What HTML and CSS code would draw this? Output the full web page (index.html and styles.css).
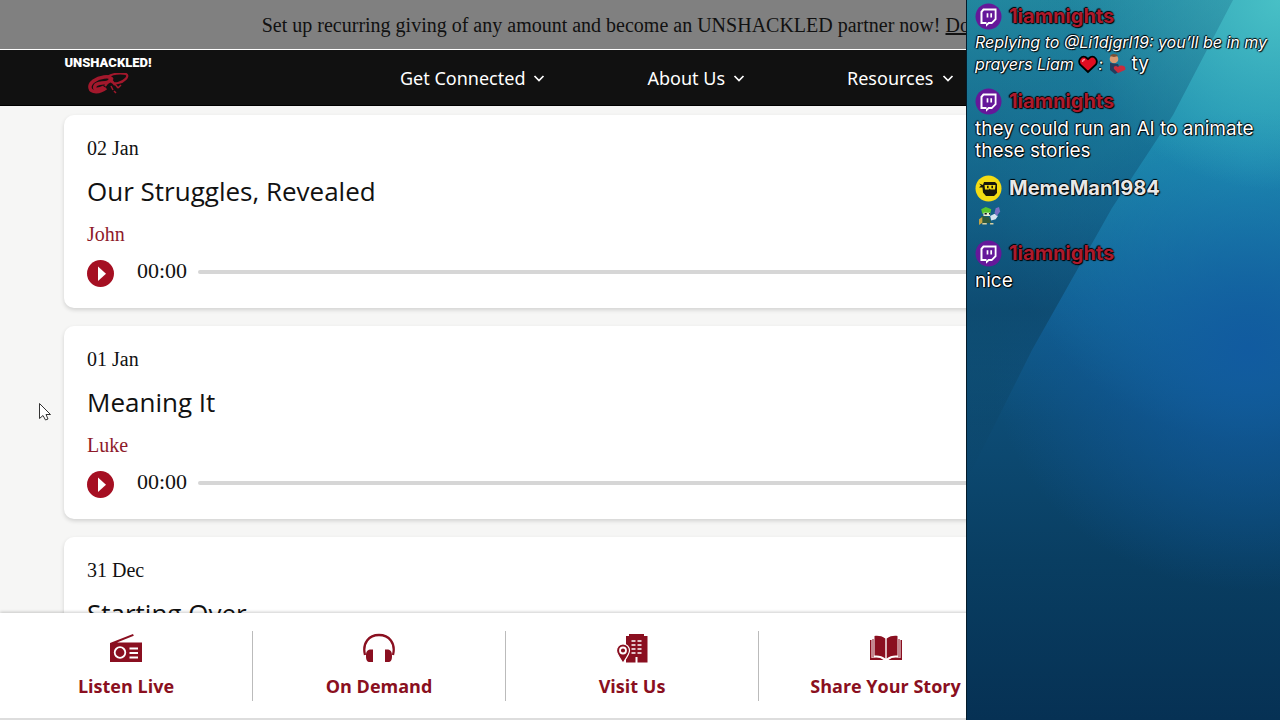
FILE: index.html
```
<!DOCTYPE html>
<html lang="en">
<head>
<meta charset="utf-8">
<title>UNSHACKLED! – Episodes</title>
<link rel="stylesheet" href="styles.css">
</head>
<body>
<svg class="defs" aria-hidden="true">
  <symbol id="chevron" viewBox="0 0 12 12"><path d="M1.500 4l4.500 4.500L10.500 4" fill="none" stroke="currentColor" stroke-width="1.700"/></symbol>
  <symbol id="play" viewBox="0 0 27 27"><circle cx="13.500" cy="13.500" r="13.500" fill="#a50f22"/><path d="M11 6.500v14.500l8-7.200z" fill="#fff"/></symbol>
  <symbol id="twitch" viewBox="0 0 27 27"><circle cx="13.500" cy="13.500" r="13" fill="#65189a"/><path d="M8 5.500h13.500v11l-4.500 4.500h-3l-3 2.800V21H5.500V8.500z" fill="#fff"/><path d="M9 7.500h10.700v8.200l-3.200 3.300h-3.200l-1.800 1.700V19H7.500V9.200z" fill="#65189a"/><path d="M12.500 10.200v4.300M16.200 10.200v4.300" stroke="#fff" stroke-width="1.700"/></symbol>
</svg>
<div class="window">
  <div class="site">
    <p class="banner">Set up recurring giving of any amount and become an UNSHACKLED partner now! <a href="#donate">Donate</a></p>
    <header class="header">
      <a class="logo" href="#home">
        <span class="logo-text">UNSHACKLED!</span>
        <svg class="logo-chain" viewBox="0 0 42 22" aria-hidden="true">
          <g fill="none" stroke="#a3182c">
            <path d="M19 15C13 20 4 20 3 15S9 5 17 4s9 3 4 5-11 0-13 4 3 4 9 1" stroke-width="3.500"/>
            <path d="M20 4c5-3 13-4 19-3 4 2-2 8-8 9s-9-2-5-5M22 4l6 8M18 13l6-8" stroke-width="2.200"/>
            <path d="M24 13l2 4m2-6l3 4m3-3l-3 3m-4 3l2 2" stroke-width="1.500"/>
          </g>
        </svg>
      </a>
      <nav class="nav" aria-label="Main">
        <button class="nav-item">Get Connected <svg class="chevron"><use href="#chevron"/></svg></button>
        <button class="nav-item">About Us <svg class="chevron"><use href="#chevron"/></svg></button>
        <button class="nav-item">Resources <svg class="chevron"><use href="#chevron"/></svg></button>
      </nav>
    </header>
    <main class="episodes">
      <article class="card">
        <time class="date">02 Jan</time>
        <h2 class="title">Our Struggles, Revealed</h2>
        <a class="author" href="#john">John</a>
        <div class="player">
          <button class="play" aria-label="Play Our Struggles, Revealed"><svg><use href="#play"/></svg></button>
          <span class="time">00:00</span>
          <input class="seek" type="range" value="0" aria-label="Seek in Our Struggles, Revealed">
        </div>
      </article>
      <article class="card">
        <time class="date">01 Jan</time>
        <h2 class="title">Meaning It</h2>
        <a class="author" href="#luke">Luke</a>
        <div class="player">
          <button class="play" aria-label="Play Meaning It"><svg><use href="#play"/></svg></button>
          <span class="time">00:00</span>
          <input class="seek" type="range" value="0" aria-label="Seek in Meaning It">
        </div>
      </article>
      <article class="card">
        <time class="date">31 Dec</time>
        <h2 class="title">Starting Over</h2>
      </article>
    </main>
    <nav class="tabs" aria-label="Quick links">
      <a class="tab" href="#live">
        <svg class="tab-icon" viewBox="0 0 32 32" fill="currentColor"><path d="M0 11L23 2l.8 1.700L7 10.500h25V30H0z"/><circle cx="10" cy="20.500" r="5.300" fill="none" stroke="#fff" stroke-width="1.800"/><path d="M19.500 16.500H28M19.500 21H28M19.500 25.500H28" stroke="#fff" stroke-width="1.800"/></svg>
        Listen Live</a>
      <a class="tab" href="#demand">
        <svg class="tab-icon" viewBox="0 0 32 32"><path d="M2 23C-1 11 6 3 16 3s17 8 14 20" fill="none" stroke="currentColor" stroke-width="2.300"/><path d="M10 17.500v12.500H7c-3 0-4-2-4-6s1-6 4-6.500zM22 17.500v12.500h3c3 0 4-2 4-6s-1-6-4-6.500z" fill="currentColor"/></svg>
        On Demand</a>
      <a class="tab" href="#visit">
        <svg class="tab-icon" viewBox="0 0 32 32" fill="currentColor"><path d="M10 4h3V2h15v2h3.500v26.500H21.500V25h-2v5.500H10z"/><path d="M15.500 9h4m2 0h4m-10 4h4m2 0h4m-10 4h4m2 0h4m-10 4h4m2 0h4" stroke="#fff" stroke-width="1.700"/><path d="M7 31C4 26.500.5 22 .5 18.500a6.500 6.500 0 0 1 13 0C13.500 22 10 26.500 7 31z" stroke="#fff" stroke-width="1.200"/><circle cx="7" cy="18.500" r="3" fill="none" stroke="#fff" stroke-width="1.800"/></svg>
        Visit Us</a>
      <a class="tab" href="#story">
        <svg class="tab-icon" viewBox="0 0 32 32" fill="currentColor"><path d="M15.300 6.500C12 4 8 3.500 4.500 4v19.500c4-.5 8 .5 10.800 3zM16.700 6.500c3.300-2.500 7.300-3 10.800-2.500v19.500c-4-.5-8 .5-10.800 3z"/><path d="M0 8h1.500v18c4-1 9-1 12 2H0zM32 8h-1.500v18c-4-1-9-1-12 2H32z"/><path d="M2.500 7H3.500v18.500H2.500zM29.500 7h-1v18.500h1z"/></svg>
        Share Your Story</a>
    </nav>
  </div>
  <svg class="cursor" viewBox="0 0 14 20" aria-hidden="true"><path d="M1.500 1.500v15l3.500-3 2.500 4.500 2.500-1-2-4.500h4.500z" fill="#fff" stroke="#333" stroke-width="1"/></svg>
</div>
<aside class="chat" aria-label="Chat">
  <section class="message">
    <h3 class="user"><svg class="avatar"><use href="#twitch"/></svg><span class="name name-red">1iamnights</span></h3>
    <p class="text text-reply"><em class="reply">Replying to @Li1djgrl19: you’ll be in my prayers Liam <svg class="heart" viewBox="0 0 20 18" role="img" aria-label="heart"><path d="M10 17L2 9.500C-.5 5 3.500.5 7.500 2L10 4l2.500-2c4-1.500 8 3 5.500 7.500z" fill="#e00d22" stroke="#000" stroke-width="1.800"/><path d="M4.500 7c0-2 1-2.500 2.500-2.500" fill="none" stroke="#ff8995" stroke-width="1.300"/></svg>:</em> <svg class="emote" viewBox="0 0 18 20" role="img" aria-label="hug"><circle cx="6" cy="5" r="4.300" fill="#d99b72"/><path d="M2 2c2-3 7-2 8 0L6 3z" fill="#795137"/><path d="M2 9l8 1 3 7-6 3-5-4z" fill="#263d5d"/><path d="M10 19l-4-4c-1-3 2-4 4-2 3-3 9-1 7 3z" fill="#c92d3d"/></svg> ty</p>
  </section>
  <section class="message">
    <h3 class="user"><svg class="avatar"><use href="#twitch"/></svg><span class="name name-red">1iamnights</span></h3>
    <p class="text">they could run an AI to animate these stories</p>
  </section>
  <section class="message">
    <h3 class="user"><svg class="avatar" viewBox="0 0 27 27"><circle cx="13.500" cy="13.500" r="13" fill="#f4dc13"/><path d="M4 8.500l4 1.500 1-3h11l2 2v9l-3 3h-8l-3-3.500-.5-5L4 12.500l2-2z" fill="#17150c"/><path d="M9.500 10h11l-.5 4.500h-4.500l-.8-1-.8 1H10z" fill="#f4dc13"/><path d="M12.800 10.800v2.500M17.200 10.800v2.500" stroke="#17150c" stroke-width="1.600"/></svg><span class="name">MemeMan1984</span></h3>
    <p class="text"><svg class="frog" viewBox="0 0 22 18" role="img" aria-label="frog wizard"><path d="M4 3l4-2 3 1 2 1-1 4H5z" fill="#58c52d"/><path d="M6 6h6v3H6z" fill="#e8edda"/><path d="M7 7h2m2 0h1" stroke="#111" stroke-width="1.500"/><path d="M4 9l7 1 2 5-10 1z" fill="#2f5a3d"/><path d="M2 12l3-2v5l-3 2z" fill="#c5a545"/><path d="M12 9l4-2 3 2-2 3-4 1z" fill="#d6e3ef"/><path d="M17 2l3-1 1 4-3 4-2-3z" fill="#7a6fc4"/><path d="M5 16h4m3 0h3" stroke="#d8cfa4" stroke-width="1.500"/></svg></p>
  </section>
  <section class="message">
    <h3 class="user"><svg class="avatar"><use href="#twitch"/></svg><span class="name name-red">1iamnights</span></h3>
    <p class="text">nice</p>
  </section>
</aside>
</body>
</html>
```
FILE: styles.css
```
* { box-sizing: border-box; }
body {
  margin: 0;
  display: flex;
  height: 100vh;
  overflow: hidden;
  font-family: "Liberation Serif", serif;
  font-size: 20px;
  color: #111;
}
h2, h3, p { margin: 0; font-weight: 400; }
a { color: inherit; }
button { padding: 0; border: 0; background: none; color: inherit; font: inherit; }
svg { display: block; flex: none; }
.defs { position: absolute; width: 0; height: 0; }

.window { position: relative; flex: 1; min-width: 0; overflow: hidden; }
/* The site keeps its full width and runs on beneath the chat column. */
.site { display: flex; flex-direction: column; width: calc(100vw - 15px); height: 100%; background: #f6f6f5; }

.banner {
  padding: 11px 0 10px;
  border-bottom: 1px solid #fff;
  background: #808080;
  line-height: 28px;
  text-align: center;
  white-space: nowrap;
}
.header {
  display: flex;
  align-items: center;
  padding: 0 64px;
  height: 56px;
  border-bottom: 1px solid #000;
  background: #111;
  color: #fff;
}
.logo { display: flex; flex-direction: column; align-items: center; width: 88px; margin-bottom: 8px; color: #fff; text-decoration: none; }
.logo-text { font: 900 13px/20px Roboto, sans-serif; }
.logo-chain { width: 42px; height: 22px; }
.nav { display: flex; gap: 102px; margin-left: 248px; }
.nav-item { display: flex; align-items: center; gap: 8px; font: 400 18px/28px "Noto Sans", sans-serif; white-space: nowrap; }
.chevron { width: 12px; height: 12px; }

.episodes { flex: 1; min-height: 0; overflow: hidden; padding: 9px 64px 0; }
.card {
  display: flex;
  flex-direction: column;
  align-items: flex-start;
  margin-bottom: 18px;
  padding: 20px 23px 21px;
  border-radius: 10px;
  background: #fff;
  box-shadow: 0 2px 4px #00000026;
}
.date { line-height: 26px; }
.title { margin: 10px 0; font: 400 26px/40px "Open Sans", sans-serif; }
.author { line-height: 26px; color: #8e1a2a; text-decoration: none; }
.player { display: flex; align-items: center; width: 100%; margin-top: 9px; }
.play, .play svg { width: 27px; height: 27px; }
.play { margin-top: 4px; }
.time { margin: 0 11px 0 23px; padding-bottom: 2px; line-height: 28px; font-size: 22px; }
.seek { flex: 1; appearance: none; height: 4px; margin: 0; border-radius: 2px; background: #d6d6d6; }
.seek::-webkit-slider-thumb { appearance: none; width: 0; height: 0; }

.tabs {
  display: grid;
  grid-template-columns: repeat(5, 1fr);
  padding: 18px 0 17px;
  border-bottom: 2px solid #ddd;
  background: #fff;
  box-shadow: 0 -1px 3px #00000033;
  z-index: 1;
}
.tab {
  display: flex;
  flex-direction: column;
  align-items: center;
  gap: 8px;
  padding: 1px 0;
  border-right: 1px solid #bbb;
  color: #8a0f20;
  font: bold 18px/28px "Open Sans", sans-serif;
  text-decoration: none;
  white-space: nowrap;
}
.tab:last-child { border-right: 0; }
.tab-icon { width: 32px; height: 32px; }
.cursor { position: absolute; left: 38px; top: 402px; width: 14px; height: 20px; }

.chat {
  position: relative;
  isolation: isolate;
  width: 314px;
  padding: 2px 8px;
  overflow: hidden;
  border-left: 1px solid #031b2a;
  background:
    radial-gradient(ellipse 210px 190px at 100% 0, #48c0c6, transparent),
    radial-gradient(ellipse 260px 240px at 90% 350px, #115ba0, transparent),
    radial-gradient(ellipse 260px 280px at 90% 160px, #1f92b4, transparent),
    linear-gradient(#2796ab 0, #1b7fa3 150px, #115f90 300px, #0d4c75 420px, #093e62 560px, #063154 100%);
  color: #fff;
  font: 500 19px/22px Inter, sans-serif;
  text-shadow: 1px 1px 1px #000, -1px 0 1px #000, 0 -1px 1px #000;
}
/* Shaded side of the diagonal light beam. */
.chat::before {
  content: "";
  position: absolute;
  inset: 0 0 auto;
  height: 480px;
  z-index: -1;
  clip-path: polygon(0 0, 266px 0, 206px 115px, 145px 208px, 65px 350px, 0 480px);
  background: linear-gradient(#125a7c44 0, #0d4a6e77 45%, #0c405e99 65%, #0c405e00 100%);
}
.message { margin-bottom: 12px; }
.user { display: flex; align-items: center; gap: 7px; height: 28px; }
.avatar { width: 27px; height: 27px; }
.name { font: 700 20px/28px Inter, sans-serif; color: #e8e8e8; }
.name-red { color: #ad1a2c; }
.text { padding-top: 3px; }
.text-reply { padding-top: 1px; line-height: 21px; }
.reply { font-size: 16px; }
.heart, .emote, .frog { display: inline-block; vertical-align: -4px; height: 20px; }
.heart { width: 20px; }
.emote { width: 18px; }
.frog { width: 28px; }
```
